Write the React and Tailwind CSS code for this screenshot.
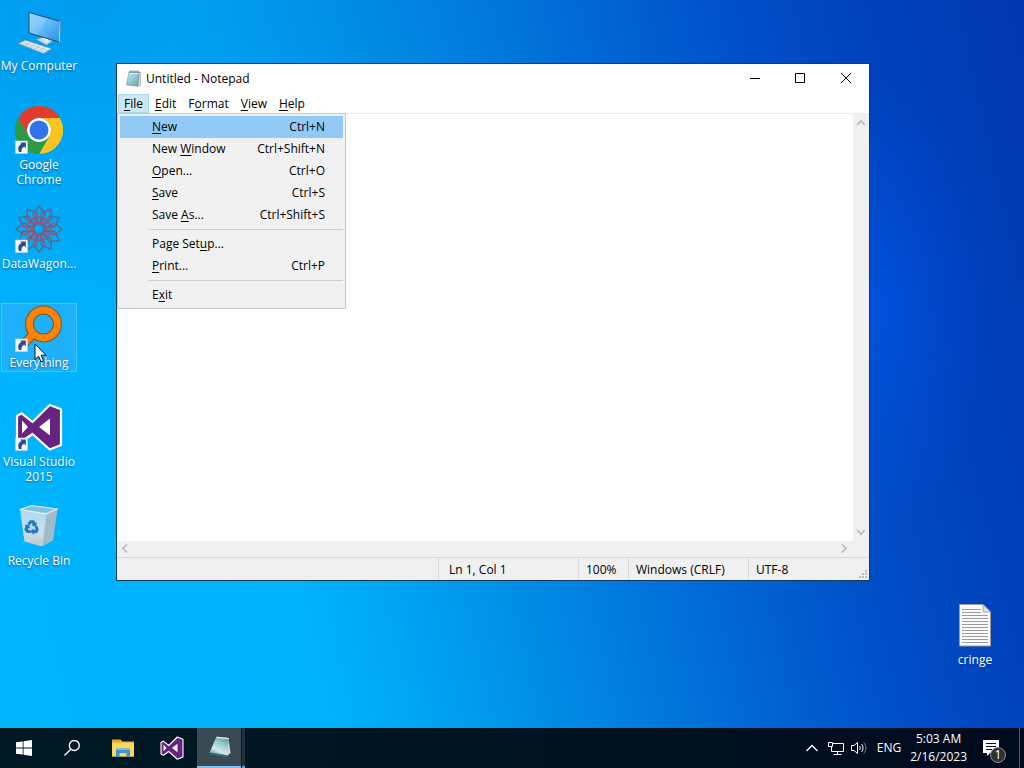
import React from "react";

const ShortcutArrow = () => (
  <g>
    <rect x="0.5" y="35" width="12" height="12.5" fill="#f4f6fa" stroke="#c9d3e4" strokeWidth="0.6" />
    <path d="M4 46c-1.600-3.800-.4-6.800 2.600-8L5.200 36.600h5.600V42.400L9.200 40.800C6.800 41.600 6.200 43.400 6.600 46z" fill="#2c4a94" />
  </g>
);

const ComputerIcon = () => (
  <svg viewBox="0 0 48 48" className="size-12">
    <defs>
      <linearGradient id="screen" x1="0" y1="0" x2="1" y2="1">
        <stop offset="0" stopColor="#8fd0fb" />
        <stop offset="0.5" stopColor="#5db8f8" />
        <stop offset="1" stopColor="#2a93e6" />
      </linearGradient>
    </defs>
    <path d="M21.500 32.500 28 30.300 37.500 34 31.500 38z" fill="#c9dce8" stroke="#7f98a8" strokeWidth="0.5" />
    <path d="M29 30v4l4 1.500v-4z" fill="#dfe9ef" />
    <path d="M14 5.500 45 14.300 44.300 35 14 26z" fill="url(#screen)" stroke="#2f4d63" strokeWidth="1" />
    <path d="M45 14.300 44.300 35" stroke="#c8d8e2" strokeWidth="1" />
    <path d="M14.600 6.300 33 11.500 22 27.700 14.600 25.500z" fill="#fff" opacity="0.14" />
    <path d="M3.300 36.600 10.500 33.200 36.600 41.800 28.500 46.400z" fill="#e8eef2" stroke="#8195a2" strokeWidth="0.6" />
    <path d="M6 36.900 30.500 45M8.500 35.500 33 43.600M10 38.200l5-2.700M15 39.800l5-2.700M20 41.500l5-2.700M25 43.200l5-2.700" stroke="#9fb1bd" strokeWidth="0.6" />
  </svg>
);

const ChromeIcon = () => (
  <svg viewBox="0 0 48 48" className="size-12">
    <circle cx="24" cy="24" r="12" fill="#fff" />
    <path d="M24,12H44.781a23.994,23.994,0,0,0-41.564.003L13.608,30l.009-.002A11.985,11.985,0,0,1,24,12Z" fill="#e33b2e" />
    <path d="M34.391,30.003,24,48A23.994,23.994,0,0,0,44.780,12.003H24l-.003.009A11.985,11.985,0,0,1,34.391,30.003Z" fill="#fcc41f" />
    <path d="M13.609,30.003,3.218,12.006A23.994,23.994,0,0,0,24.003,48L34.393,30.003l-.007-.007a11.985,11.985,0,0,1-20.778.007Z" fill="#2a9a45" />
    <circle cx="24" cy="24" r="9.500" fill="#2f74ea" />
    <ShortcutArrow />
  </svg>
);

const petals = [0, 30, 60, 90, 120, 150, 180, 210, 240, 270, 300, 330];

const DataWagonIcon = () => (
  <svg viewBox="0 0 48 48" className="size-12">
    <g fill="none" stroke="#5a6890" strokeWidth="1.500">
      {petals.map((angle) => (
        <g key={angle} transform={`rotate(${angle} 24 24)`}>
          <path d="M24 19 18 9 24 1 30 9z" />
          <path d="M20 14 27 19" stroke="#95557a" />
          <circle cx="24" cy="12" r="1.200" fill="#c94a64" stroke="none" />
          <circle cx="18.500" cy="9" r="1" fill="#c94a64" stroke="none" />
          <circle cx="24" cy="17" r="1" fill="#b84f70" stroke="none" />
        </g>
      ))}
      <circle cx="24" cy="24" r="5.500" />
      <circle cx="24" cy="24" r="11" stroke="#8a5a80" strokeDasharray="3 2" />
    </g>
    <ShortcutArrow />
  </svg>
);

const EverythingIcon = () => (
  <svg viewBox="0 0 48 48" className="size-12" fill="none">
    <path d="M19 29 8 41" stroke="#7b5a22" strokeWidth="9" />
    <circle cx="28.500" cy="20" r="14" stroke="#7b5a22" strokeWidth="9" />
    <path d="M20 28 8 41" stroke="#ff8308" strokeWidth="6.600" />
    <circle cx="28.500" cy="20" r="14" stroke="#ff8308" strokeWidth="6.800" />
    <ShortcutArrow />
  </svg>
);

const VisualStudioMark = () => (
  <g>
    <path
      d="M2 13 6.700 10.300 17.500 19 34.700 2 46 6.300V42L34.700 46.500 17.500 31 6.700 38.500 2 36z"
      fill="#662380"
      stroke="#fff"
      strokeWidth="2.200"
      strokeLinejoin="round"
    />
    <path d="M7 17.500V30.500L13 24z" fill="#fff" />
    <path d="M35 15.500V32.500L24 24z" fill="#fff" />
  </g>
);

const VisualStudioIcon = () => (
  <svg viewBox="0 0 48 48" className="size-12">
    <VisualStudioMark />
    <ShortcutArrow />
  </svg>
);

const RecycleBinIcon = () => (
  <svg viewBox="0 0 48 48" className="size-12">
    <defs>
      <linearGradient id="bin" x1="0" y1="0" x2="0" y2="1">
        <stop offset="0" stopColor="#a9daf3" />
        <stop offset="0.6" stopColor="#cfdfe8" />
        <stop offset="1" stopColor="#c3c6c9" />
      </linearGradient>
    </defs>
    <path d="M5 7.500 9.500 39.500 27 44.500 31 11.500z" fill="url(#bin)" />
    <path d="M31 11.500 27 44.500 38 38.500 42.500 7z" fill="#9fbccb" />
    <path d="M5 7.500 17 3.500 42.500 7 31 11.800z" fill="#7fbfe0" stroke="#e5f3fa" strokeWidth="1.200" strokeLinejoin="round" />
    <path d="M31 12 27 44" stroke="#d9e8f0" strokeWidth="0.700" />
    <g fill="#1878cc">
      <path id="recycle" d="M12.500 21.500 15 18.200h4l1.800 2.700 1.400-.6-1.400 4.500-4.500-1.300 1.600-.8-1.200-1.800-2.100 2.400z" />
      <use href="#recycle" transform="rotate(120 16.700 25.500)" />
      <use href="#recycle" transform="rotate(240 16.700 25.500)" />
    </g>
  </svg>
);

const TextFileIcon = () => (
  <svg viewBox="0 0 48 48" className="size-12">
    <path d="M8.500 3.500H32L39.500 11V45H8.500z" fill="#fbfbfb" stroke="#9a9a93" strokeWidth="1" />
    <path d="M32 3.500V11h7.500z" fill="#dcdfe3" stroke="#9a9a93" strokeWidth="0.800" />
    <path
      d="M11 8.500H30M11 11.500H30M11 14.500H37M11 17.500H37M11 20.500H37M11 23.500H37M11 26.500H37M11 29.500H37M11 32.500H37M11 35.500H37M11 38.500H37M11 41.500H37"
      stroke="#999b9e"
      strokeWidth="1"
    />
  </svg>
);

const NotepadIcon = () => (
  <svg viewBox="0 0 16 18" className="h-[18px] w-4">
    <defs>
      <linearGradient id="pad" x1="0" y1="0" x2="1" y2="1">
        <stop offset="0" stopColor="#cdeef2" />
        <stop offset="0.500" stopColor="#8fc9d3" />
        <stop offset="1" stopColor="#5fa3b0" />
      </linearGradient>
    </defs>
    <path d="M14 2 15.500 2.500V15.500L12.500 16.500z" fill="#e0d8ba" stroke="#8e927f" strokeWidth="0.500" />
    <path d="M4 2H14.200L12.700 16.300 1.500 15z" fill="url(#pad)" stroke="#6d8f96" strokeWidth="0.600" />
    <path d="M4.500 3.300H13.700" stroke="#eef9fa" strokeWidth="1" />
    <path d="M5 .6V3M7 .6V3M9 .6V3M11 .6V3M13 .6V3" stroke="#55676b" strokeWidth="0.900" />
  </svg>
);

const desktopItems = [
  { label: "My Computer", icon: <ComputerIcon /> },
  { label: "Google Chrome", icon: <ChromeIcon /> },
  { label: "DataWagon...", icon: <DataWagonIcon /> },
  { label: "Everything", icon: <EverythingIcon />, selected: true },
  { label: "Visual Studio 2015", icon: <VisualStudioIcon /> },
  { label: "Recycle Bin", icon: <RecycleBinIcon /> },
];

const DesktopItem = ({ label, icon, selected }) => (
  <button
    type="button"
    className={`flex w-[76px] flex-col items-center gap-[3px] border pb-px text-white ${
      selected ? "border-[#4cc4fc] bg-[#1eb0f8]" : "border-transparent"
    }`}
  >
    {icon}
    <span className="w-[80px] text-center leading-[15px] [text-shadow:0_1px_2px_rgba(0,40,90,0.6)]">{label}</span>
  </button>
);

const menuBar = [
  ["", "F", "ile"],
  ["", "E", "dit"],
  ["F", "o", "rmat"],
  ["", "V", "iew"],
  ["", "H", "elp"],
];

const fileMenu = [
  { text: ["", "N", "ew"], keys: "Ctrl+N", active: true },
  { text: ["New ", "W", "indow"], keys: "Ctrl+Shift+N" },
  { text: ["", "O", "pen..."], keys: "Ctrl+O" },
  { text: ["", "S", "ave"], keys: "Ctrl+S" },
  { text: ["Save ", "A", "s..."], keys: "Ctrl+Shift+S" },
  null,
  { text: ["Page Set", "u", "p..."] },
  { text: ["", "P", "rint..."], keys: "Ctrl+P" },
  null,
  { text: ["E", "x", "it"] },
];

const Mnemonic = ({ text }) => (
  <span className="whitespace-pre">
    {text[0]}
    <span className="underline decoration-1 underline-offset-2">{text[1]}</span>
    {text[2]}
  </span>
);

const FileMenu = () => (
  <div role="menu" className="absolute top-[19px] left-0 z-10 w-[229px] border border-[#c8c8c8] bg-[#f1f1f1] p-[2px]">
    {fileMenu.map((item, index) =>
      item ? (
        <button
          key={index}
          type="button"
          role="menuitem"
          className={`flex h-[22px] w-full items-center justify-between pr-[18px] pl-8 ${item.active ? "bg-[#91c9f7]" : ""}`}
        >
          <Mnemonic text={item.text} />
          <span>{item.keys}</span>
        </button>
      ) : (
        <div key={index} role="separator" className="flex h-[7px] items-center pl-7">
          <div className="h-px w-full bg-[#d0d0d0]" />
        </div>
      )
    )}
  </div>
);

const Chevron = ({ d }) => (
  <svg viewBox="0 0 16 16" className="size-4" fill="none" stroke="#b8b8b8" strokeWidth="1.600">
    <path d={d} />
  </svg>
);

const NotepadWindow = () => (
  <section className="absolute top-[63px] left-[116px] flex h-[518px] w-[754px] flex-col border border-[#12395f] bg-white text-black">
    <header className="flex h-[30px] shrink-0 items-center pl-2">
      <NotepadIcon />
      <h1 className="ml-[5px] flex-1">Untitled - Notepad</h1>
      <button type="button" aria-label="Minimize" className="flex h-7 w-[45px] items-center justify-center">
        <svg viewBox="0 0 12 12" className="size-3" stroke="#000">
          <path d="M1 5.500H11" />
        </svg>
      </button>
      <button type="button" aria-label="Maximize" className="flex h-7 w-[46px] items-center justify-center">
        <svg viewBox="0 0 12 12" className="size-3" stroke="#000" fill="none">
          <path d="M1.500 .5H10.500V9.500H1.500z" />
        </svg>
      </button>
      <button type="button" aria-label="Close" className="flex h-7 w-[46px] items-center justify-center">
        <svg viewBox="0 0 12 12" className="size-3" stroke="#000" fill="none">
          <path d="M1 0 11 10M11 0 1 10" />
        </svg>
      </button>
    </header>
    <nav className="relative flex h-5 shrink-0 border-b border-[#ececec] pl-px">
      {menuBar.map((text, index) => (
        <button
          key={index}
          type="button"
          className={`border px-[5px] leading-[17px] ${
            index === 0 ? "border-[#a8d8ec] bg-[#cce8f6]" : "border-transparent"
          }`}
        >
          <Mnemonic text={text} />
        </button>
      ))}
      <FileMenu />
    </nav>
    <div className="flex min-h-0 flex-1">
      <textarea aria-label="Document" className="flex-1 resize-none outline-none" />
      <div className="flex w-4 flex-col justify-between bg-[#f0f0f0]">
        <button type="button" aria-label="Scroll up">
          <Chevron d="M4 11 8 7 12 11" />
        </button>
        <button type="button" aria-label="Scroll down">
          <Chevron d="M4 5 8 9 12 5" />
        </button>
      </div>
    </div>
    <div className="flex h-4 shrink-0 justify-between bg-[#f0f0f0] pr-[17px]">
      <button type="button" aria-label="Scroll left">
        <Chevron d="M10 3.500 6 7.500 10 11.500" />
      </button>
      <button type="button" aria-label="Scroll right">
        <Chevron d="M6 3.500 10 7.500 6 11.500" />
      </button>
    </div>
    <footer className="flex h-[23px] shrink-0 items-stretch border-t border-[#d9d9d9] bg-[#f0f0f0] leading-6">
      <span className="flex-1" />
      <span className="w-[140px] border-l border-[#d9d9d9] pl-[10px]">Ln 1, Col 1</span>
      <span className="w-[50px] border-l border-[#d9d9d9] pl-[7px]">100%</span>
      <span className="w-[120px] border-l border-[#d9d9d9] pl-[7px]">Windows (CRLF)</span>
      <span className="flex w-[121px] justify-between border-l border-[#d9d9d9] pl-[7px]">
        UTF-8
        <svg viewBox="0 0 12 12" className="size-3 self-end" fill="#bdbdbd">
          <path d="M8 2h2v2H8zM5 5h2v2H5zM8 5h2v2H8zM2 8h2v2H2zM5 8h2v2H5zM8 8h2v2H8z" />
        </svg>
      </span>
    </footer>
  </section>
);

const Cursor = () => (
  <svg viewBox="0 0 13 20" className="pointer-events-none absolute top-[343px] left-[34px] z-20 h-5 w-[13px]">
    <path d="M1 1V16.500L4.600 13.200 7 18.800 9.500 17.700 7.200 12.200H12z" fill="#fff" stroke="#111" strokeWidth="1" />
  </svg>
);

const Taskbar = () => (
  <footer className="flex h-10 shrink-0 items-stretch bg-linear-to-r from-[#001a26] via-[#001320] to-[#000b1e] text-white">
    <button type="button" aria-label="Start" className="flex w-12 items-center justify-center">
      <svg viewBox="0 0 16 16" className="size-4" fill="#fff">
        <path d="M0 2.300 6.700 1.400V7.600H0zM7.500 1.300 16 0V7.600H7.500zM0 8.400H6.700V14.600L0 13.700zM7.500 8.400H16V16L7.500 14.700z" />
      </svg>
    </button>
    <button type="button" aria-label="Search" className="flex w-12 items-center justify-center">
      <svg viewBox="0 0 16 16" className="size-4" fill="none" stroke="#fff" strokeWidth="1.300">
        <circle cx="10.300" cy="5.500" r="5" />
        <path d="M6.800 9.200 0.500 15.500" />
      </svg>
    </button>
    <button type="button" aria-label="File Explorer" className="ml-[3px] flex w-12 items-center justify-center">
      <svg viewBox="0 0 22 20" className="h-5 w-[22px]">
        <path d="M0 1.500H8.500L10.500 3.500H22V18.500H0z" fill="#e9a426" />
        <path d="M0 4.500H22V18.500H0z" fill="#fbd75f" />
        <path d="M4 10.500H18V19H14.500V15H7.500V19H4z" fill="#3f94cf" />
        <path d="M4 10.500H18V12H4z" fill="#7fbde2" />
      </svg>
    </button>
    <button type="button" aria-label="Visual Studio" className="flex w-[50px] items-center justify-center">
      <svg viewBox="0 0 48 48" className="size-6">
        <VisualStudioMark />
      </svg>
    </button>
    <button type="button" aria-label="Notepad" className="flex w-12">
      <span className="flex h-full w-11 items-center justify-center border-b-2 border-[#7fbdf0] bg-[#3a4a54]">
        <svg viewBox="0 0 24 24" className="size-6">
          <defs>
            <linearGradient id="taskpad" x1="0.200" y1="1" x2="0.700" y2="0">
              <stop offset="0" stopColor="#3b8f9b" />
              <stop offset="0.350" stopColor="#cfeaea" />
              <stop offset="0.650" stopColor="#9fcfd2" />
              <stop offset="1" stopColor="#5d9aa3" />
            </linearGradient>
          </defs>
          <path d="M21.500 3 23.500 18 19 22z" fill="#d9d6c4" />
          <path d="M9.500 1.500 22 3 20 22 2 19z" fill="url(#taskpad)" />
          <path d="M2.600 17.500 20.200 20.300 20 22 2 19z" fill="#1f6470" />
          <path d="M9.700 2.300 21.700 3.700" stroke="#dff2f2" strokeWidth="1.200" />
        </svg>
      </span>
      <span className="ml-px h-full w-[3px] border-b-2 border-[#6aa2cc] bg-[#22323d]" />
    </button>
    <div className="flex flex-1 items-center justify-end">
      <button type="button" aria-label="Show hidden icons" className="mr-2">
        <svg viewBox="0 0 14 14" className="size-[14px]" fill="none" stroke="#fff" strokeWidth="1.300">
          <path d="M1.500 10 7 4.500 12.500 10" />
        </svg>
      </button>
      <button type="button" aria-label="Network" className="mr-[6px]">
        <svg viewBox="0 0 18 16" className="h-4 w-[18px]" fill="none" stroke="#fff">
          <path d="M5.500 3.500H16.500V11.500H4.500V7M10.500 11.500V14.500M6.500 14.500H14.500" />
          <path d="M1.500 2.500H5.500V6.500H1.500z" />
        </svg>
      </button>
      <button type="button" aria-label="Volume" className="mr-[10px]">
        <svg viewBox="0 0 16 16" className="size-4" fill="none" stroke="#fff">
          <path d="M0.500 5.500H3L6.500 2.500V13.500L3 10.500H0.500zM8.500 6c1 1.200 1 2.800 0 4M10.500 4c2 2.400 2 5.600 0 8" />
          <path d="M12.700 2.500c3 3.400 3 7.600 0 11" stroke="#7c8793" />
        </svg>
      </button>
      <button type="button" className="mr-[9px]">
        ENG
      </button>
      <button type="button" className="mr-[15px] text-center leading-[18px]">
        5:03 AM
        <br />
        2/16/2023
      </button>
      <button type="button" aria-label="Notifications" className="relative mr-[19px] h-10 w-[18px]">
        <svg viewBox="0 0 18 18" className="size-[18px]">
          <path d="M1 1H17V14H8L5 17V14H1z" fill="#fff" />
          <path d="M4 4.500H14M4 7.500H14M4 10.500H10" stroke="#06101f" />
        </svg>
        <span className="absolute top-[19px] left-2 size-4 rounded-full border border-[#8a8f96] bg-[#2d3239] text-center leading-[14px]">
          1
        </span>
      </button>
      <button type="button" aria-label="Show desktop" className="h-full w-[5px] border-l border-[#4d5561]" />
    </div>
  </footer>
);

const App = () => {
  return (
    <div className="flex min-h-screen flex-col overflow-hidden bg-[#0078e0] font-['Open_Sans','Noto_Sans',sans-serif] text-[12px]">
      <main className="relative flex-1 bg-[radial-gradient(ellipse_110px_220px_at_86%_42%,rgba(0,90,250,0.45),transparent),radial-gradient(ellipse_520px_360px_at_8%_0%,rgba(0,90,200,0.25),transparent),linear-gradient(77deg,#00b4ff_0%,#00b2fa_28%,#00a4f2_36%,#0090e8_45%,#0080e0_52%,#0068d4_63%,#0050c8_75%,#0040ba_88%,#0038b0_100%)]">
        <div className="grid w-[78px] auto-rows-[99px] items-start pt-[6px] pl-px">
          {desktopItems.map((item) => (
            <DesktopItem key={item.label} {...item} />
          ))}
        </div>
        <div className="absolute top-[600px] left-[937px]">
          <DesktopItem label="cringe" icon={<TextFileIcon />} />
        </div>
        <NotepadWindow />
        <Cursor />
      </main>
      <Taskbar />
    </div>
  );
};

export default App;
